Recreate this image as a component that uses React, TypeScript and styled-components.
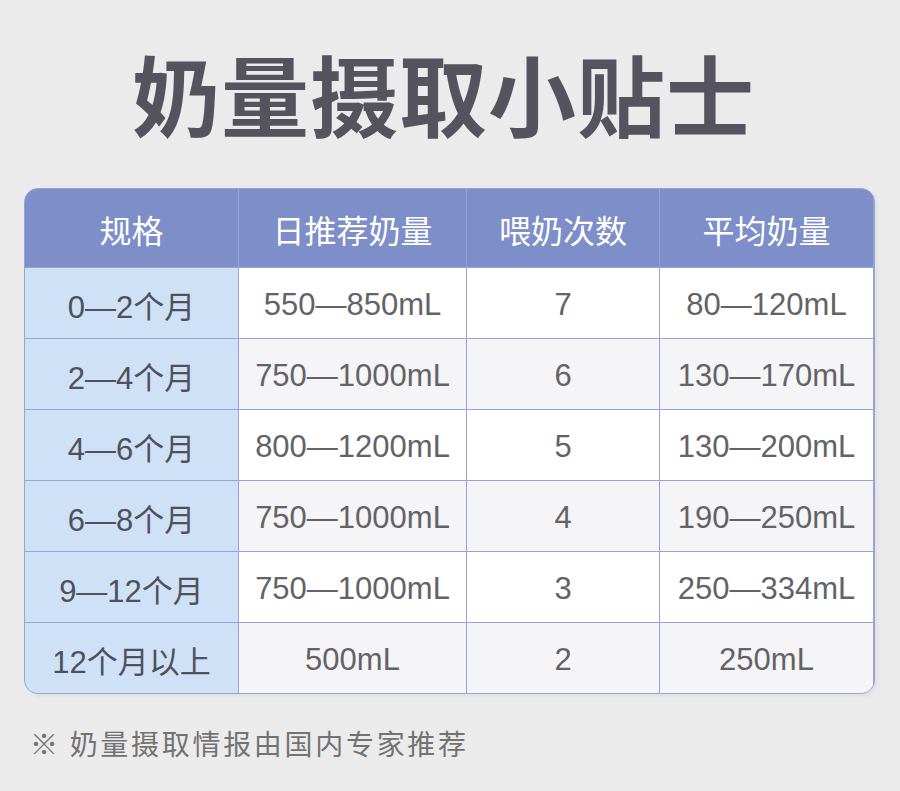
import styled, { createGlobalStyle } from 'styled-components'

const GlobalStyle = createGlobalStyle`
  html, body {
    margin: 0;
    padding: 0;
    background: #ebebeb;
  }
  body {
    font-family: "Liberation Sans", "Noto Sans CJK SC", sans-serif;
  }
`

const Page = styled.div`
  width: 900px;
  height: 791px;
  box-sizing: border-box;
  padding: 47px 27px 0 24px;
  background: #ebebeb;
`

const Title = styled.h1`
  margin: 0;
  font-family: "Noto Sans CJK SC", sans-serif;
  font-size: 88px;
  line-height: 90px;
  font-weight: 700;
  color: #55535e;
  text-align: center;
  letter-spacing: 1px;
  padding-right: 10px;
`

const Table = styled.div`
  margin-top: 51px;
  width: 849px;
  display: grid;
  grid-template-columns: 213px 227px 192px 213px;
  grid-template-rows: 78px repeat(6, 70px);
  gap: 1px;
  background: #97a5d6;
  border: 1px solid #97a5d6;
  border-radius: 14px;
  overflow: hidden;
  box-shadow: 2px 2px 4px rgba(0, 0, 0, 0.05);
`

const HeadCell = styled.div`
  display: flex;
  align-items: center;
  justify-content: center;
  background: #7d8ec8;
  color: #ffffff;
  font-family: "Noto Sans CJK SC", sans-serif;
  font-size: 32px;
  padding-top: 2px;
`

const AgeCell = styled.div`
  display: flex;
  align-items: center;
  justify-content: center;
  background: #cee1f6;
  color: #50505a;
  font-size: 31px;
  padding-top: 3px;
`

const Cell = styled.div<{ $shade: boolean }>`
  display: flex;
  align-items: center;
  justify-content: center;
  background: ${(p) => (p.$shade ? '#f5f5f7' : '#ffffff')};
  color: #636367;
  font-size: 31px;
  padding-top: 3px;
`

const Note = styled.p`
  margin: 29px 0 0 6px;
  font-family: "Noto Sans CJK SC", sans-serif;
  font-size: 28px;
  color: #727272;
  letter-spacing: 2.7px;
`

const heads = ['规格', '日推荐奶量', '喂奶次数', '平均奶量']

const rows = [
  ['0—2个月', '550—850mL', '7', '80—120mL'],
  ['2—4个月', '750—1000mL', '6', '130—170mL'],
  ['4—6个月', '800—1200mL', '5', '130—200mL'],
  ['6—8个月', '750—1000mL', '4', '190—250mL'],
  ['9—12个月', '750—1000mL', '3', '250—334mL'],
  ['12个月以上', '500mL', '2', '250mL'],
]

function App() {
  return (
    <>
      <GlobalStyle />
      <Page>
        <Title>奶量摄取小贴士</Title>
        <Table>
          {heads.map((h) => (
            <HeadCell key={h}>{h}</HeadCell>
          ))}
          {rows.map((r, i) => (
            <>
              <AgeCell key={r[0]}>{r[0]}</AgeCell>
              <Cell $shade={i % 2 === 1}>{r[1]}</Cell>
              <Cell $shade={i % 2 === 1}>{r[2]}</Cell>
              <Cell $shade={i % 2 === 1}>{r[3]}</Cell>
            </>
          ))}
        </Table>
        <Note>※ 奶量摄取情报由国内专家推荐</Note>
      </Page>
    </>
  )
}

export default App
